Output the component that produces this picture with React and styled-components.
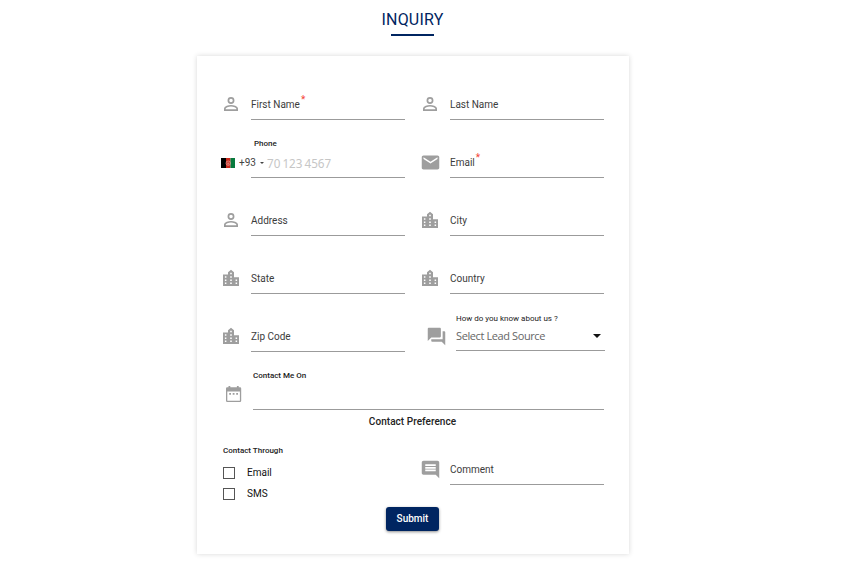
import React from 'react';
import styled, { createGlobalStyle } from 'styled-components';
import { MdEmail, MdQuestionAnswer, MdComment } from 'react-icons/md';

const GlobalStyle = createGlobalStyle`
  * { box-sizing: border-box; }
  body {
    margin: 0;
    background: #fff;
    color: #3c3c3c;
    font-family: Roboto, sans-serif;
    font-size: 10px;
  }
`;

const Page = styled.main`
  height: 568px;
  display: flex;
  flex-direction: column;
  align-items: center;
  padding-right: 24px;
  overflow: hidden;
`;

const Title = styled.h1`
  margin: 10px 1px 0 0;
  height: 26px;
  font-size: 16px;
  line-height: 19px;
  font-weight: 400;
  letter-spacing: 0.2px;
  color: #002561;
  display: flex;
  flex-direction: column;
  align-items: center;

  &::after {
    content: '';
    width: 43px;
    height: 2px;
    margin-top: 5px;
    background: #002561;
  }
`;

const Card = styled.form`
  width: 432px;
  height: 498px;
  margin-top: 20px;
  padding: 6px 25px 0 24px;
  background: #fff;
  box-shadow: 0 0 5px rgba(0, 0, 0, 0.16);
`;

const Grid = styled.div`
  display: grid;
  grid-template-columns: 184px 184px;
  column-gap: 15px;
  grid-auto-rows: 58px;
`;

const Field = styled.div`
  display: grid;
  grid-template-columns: 20px 1fr;
  column-gap: ${(p) => p.$gap ?? 10}px;
  height: 58px;
  margin-left: ${(p) => p.$shift ?? 0}px;
  margin-right: ${(p) => p.$outset ?? 0}px;
  margin-top: ${(p) => p.$lift ?? 0}px;
`;

const IconSlot = styled.span`
  display: flex;
  align-items: center;
  justify-content: center;
  align-self: end;
  width: 20px;
  height: 20px;
  margin-bottom: ${(p) => p.$bottom ?? 6}px;
  color: #9e9e9e;

  svg {
    flex: none;
    width: ${(p) => p.$size ?? 20}px;
    height: ${(p) => p.$size ?? 20}px;
  }
`;

const Control = styled.div`
  display: flex;
  align-items: flex-end;
  height: 58px;
  padding-bottom: 8px;
  border-bottom: 1px solid #9b9b9b;
  line-height: 12px;
`;

const Required = styled.sup`
  align-self: flex-end;
  margin: 0 0 5px 1px;
  font-size: 10px;
  line-height: 12px;
  color: #f44336;
`;

const StackedControl = styled(Control)`
  flex-direction: column;
  align-items: stretch;
  justify-content: flex-end;
  padding-bottom: ${(p) => p.$bottom ?? 8}px;
`;

const Caption = styled.span`
  height: 10px;
  margin: 0 0 ${(p) => p.$below ?? 0}px ${(p) => p.$inset ?? 0}px;
  font-size: 8px;
  line-height: 10px;
  font-weight: ${(p) => p.$weight ?? 500};
  white-space: nowrap;
  color: #222;
`;

const PhoneField = styled.div`
  display: flex;
  flex-direction: column;
  justify-content: flex-end;
  height: 58px;
`;

const PhoneRow = styled.div`
  display: flex;
  align-items: center;
  height: 14px;
  margin-bottom: 7px;
`;

const PhoneLine = styled.div`
  height: 1px;
  margin-left: 30px;
  background: #9b9b9b;
`;

const DialCode = styled.span`
  width: 21px;
  margin-left: 4px;
  font-size: 10px;
  line-height: 14px;
  color: #444;
`;

const SmallCaret = styled.span`
  margin-right: 3px;
  border: 2px solid transparent;
  border-top-color: #444;
  border-bottom: 0;
`;

const PhoneInput = styled.span`
  font: 11.7px/14px "Noto Sans", sans-serif;
  word-spacing: -1px;
  white-space: nowrap;
  color: #c6c6c6;
`;

const SelectValue = styled.div`
  display: flex;
  align-items: center;
  justify-content: space-between;
  height: 14px;
  padding-right: 4px;
  font: 400 11px/14px "Open Sans", sans-serif;
  letter-spacing: -0.4px;
  color: #666;

  &::after {
    content: '';
    border: 4px solid transparent;
    border-top-color: #111;
    border-bottom: 0;
  }
`;

const SectionTitle = styled.h2`
  margin: 6px 0 0;
  height: 12px;
  text-align: center;
  font-size: 10px;
  line-height: 12px;
  font-weight: 500;
  letter-spacing: 0.05px;
  color: #222;
`;

const Preferences = styled.div`
  display: grid;
  grid-template-columns: 184px 184px;
  column-gap: 15px;
  height: 79px;
`;

const Through = styled.div`
  padding: 18px 0 0 2px;
`;

const Option = styled.label`
  display: flex;
  align-items: center;
  height: 21px;
  gap: 12px;
  color: #111;
`;

const Box = styled.span`
  width: 12px;
  height: 12px;
  border: 1px solid #555;
`;

const Submit = styled.button`
  display: block;
  width: 53px;
  height: 24px;
  margin: 0 auto;
  padding: 0;
  border: 0;
  border-radius: 3px;
  background: #002561;
  box-shadow: 0 1px 3px rgba(0, 0, 0, 0.45);
  color: #fff;
  font: 500 10px/24px Roboto, sans-serif;
`;

function Flag() {
  return (
    <svg width="14" height="10" viewBox="0 0 14 10">
      <path d="M0 0h5v10H0z" fill="#000" />
      <path d="M5 0h4.5v10H5z" fill="#c9291c" />
      <path d="M9.5 0h4.5v10h-4.5z" fill="#087a3d" />
      <circle cx="7.2" cy="5.2" r="2.2" fill="none" stroke="#e6b0aa" strokeWidth="0.9" opacity="0.7" />
      <path d="M6.2 4.5h2v2h-2z" fill="#e6b0aa" opacity="0.6" />
    </svg>
  );
}

function PersonIcon() {
  return (
    <svg viewBox="0 0 20 20" fill="none" stroke="currentColor" strokeWidth="1.7">
      <circle cx="10" cy="6.5" r="2.6" />
      <path d="M3.85 16.15v-1.6c0-1.8 3.7-2.8 6.15-2.8s6.15 1 6.15 2.8v1.6z" />
    </svg>
  );
}

function CityIcon() {
  return (
    <svg viewBox="0 0 20 20" fill="currentColor" fillRule="evenodd">
      <path d="M2 6.5h5V4.3L10 1.8l3 2.5V9.3h5V18H2zM3.9 8.2v1.5h1.5V8.2zM3.9 11.4v1.5h1.5v-1.5zM3.9 14.6v1.5h1.5v-1.5zM9.2 4.7v1.5h1.6V4.7zM9.2 8.2v1.5h1.6V8.2zM9.2 11.4v1.5h1.6v-1.5zM9.2 14.6v1.5h1.6v-1.5zM14.6 11.4v1.5h1.5v-1.5zM14.6 14.6v1.5h1.5v-1.5z" />
    </svg>
  );
}

function CalendarIcon() {
  return (
    <svg viewBox="0 0 20 20" fill="currentColor" fillRule="evenodd">
      <path d="M4.5 2h1.8v1.3h6.6V2h1.8v1.3H16A1.2 1.2 0 0 1 17.2 4.5v12.3A1.2 1.2 0 0 1 16 18H3.2A1.2 1.2 0 0 1 2 16.8V4.5a1.2 1.2 0 0 1 1.2-1.2h1.3zM3.3 7.5v9.2h12.6V7.5z" />
      <path d="M5.2 9h1.8v1.7H5.2zM8.7 9h1.8v1.7H8.7zM12.2 9H14v1.7h-1.8z" />
    </svg>
  );
}

function TextField({ icon: Icon, label, required, lift, iconSize }) {
  return (
    <Field $lift={lift}>
      <IconSlot $size={iconSize}><Icon /></IconSlot>
      <Control>
        {label}
        {required && <Required>*</Required>}
      </Control>
    </Field>
  );
}

export default function App() {
  return (
    <>
      <GlobalStyle />
      <Page>
        <Title>INQUIRY</Title>
        <Card>
          <Grid>
            <TextField icon={PersonIcon} label="First Name" required />
            <TextField icon={PersonIcon} label="Last Name" />
            <PhoneField>
              <Caption $inset={33} $below={7}>Phone</Caption>
              <PhoneRow>
                <Flag />
                <DialCode>+93</DialCode>
                <SmallCaret />
                <PhoneInput>70 123 4567</PhoneInput>
              </PhoneRow>
              <PhoneLine />
            </PhoneField>
            <TextField icon={MdEmail} iconSize={21} label="Email" required />
            <TextField icon={PersonIcon} label="Address" />
            <TextField icon={CityIcon} label="City" />
            <TextField icon={CityIcon} label="State" />
            <TextField icon={CityIcon} label="Country" />
            <TextField icon={CityIcon} label="Zip Code" />
            <Field $shift={6} $gap={10} $outset={-1} $lift={-1}>
              <IconSlot $size={21} $bottom={5}><MdQuestionAnswer /></IconSlot>
              <StackedControl $bottom={7}>
                <Caption $weight={400} $below={5}>How do you know about us ?</Caption>
                <SelectValue>Select Lead Source</SelectValue>
              </StackedControl>
            </Field>
          </Grid>
          <Field $shift={3} $gap={9}>
            <IconSlot><CalendarIcon /></IconSlot>
            <StackedControl>
              <Caption $below={20}>Contact Me On</Caption>
            </StackedControl>
          </Field>
          <SectionTitle>Contact Preference</SectionTitle>
          <Preferences>
            <Through>
              <Caption as="div" $below={6}>Contact Through</Caption>
              <Option><Box />Email</Option>
              <Option><Box />SMS</Option>
            </Through>
            <TextField icon={MdComment} iconSize={21} label="Comment" lift={-1} />
          </Preferences>
          <Submit type="button">Submit</Submit>
        </Card>
      </Page>
    </>
  );
}
